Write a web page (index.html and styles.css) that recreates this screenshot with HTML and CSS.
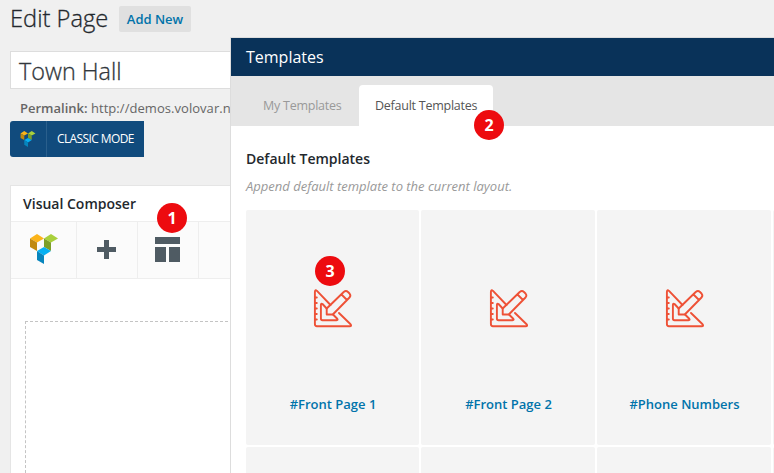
FILE: index.html
```html
<!DOCTYPE html>
<html lang="en">
<head>
<meta charset="utf-8">
<title>Edit Page</title>
<link rel="stylesheet" href="styles.css">
</head>
<body>
<svg class="defs" width="0" height="0">
  <symbol id="cubes" viewBox="0 0 28 30">
    <path fill="#fbb41a" d="M0 4.500 7 0l7 4.500L7 8.500z"/>
    <path fill="#c18a10" d="M0 4.500 7 8.500V17L0 13z"/>
    <path fill="#a9d03c" d="M14 4.500 21 0l7 4.500-7 4z"/>
    <path fill="#7c9f27" d="M14 4.500 21 8.500V17l-7-4z"/>
    <path fill="#06b0f2" d="M7 17l7-4 7 4-7 4.500z"/>
    <path fill="#0785bd" d="M7 17l7 4.500V30l-7-4z"/>
  </symbol>
  <symbol id="draft" viewBox="0 0 42 42">
    <g fill="none" stroke="#ee5136" stroke-width="1.900" stroke-linejoin="round" stroke-linecap="round">
      <path d="M18.500 17 5 2.900Q2.900 1 2.900 4V36Q2.900 38.200 5 38.200H37.500Q40.300 38.200 38.300 36L27 25"/>
      <path d="M14.700 20.500 10.500 16Q8.900 15 8.900 17V30.500Q8.900 32.200 10.500 32.200H24.500Q26.500 32.200 25 30.500L21 26.500"/>
      <path d="M14.700 26.500V20.500L31.700 4Q34 2.200 36 4L37.500 5.500Q39.200 7.500 37.500 9.500L20.800 26.500zM29.500 6.500l5.500 5.500M3 9.500h1.800M3 15h1.800M3 20.500h1.800M3 26h1.800M3 31.500h1.800"/>
    </g>
  </symbol>
</svg>
<main class="page">
  <header class="heading"><h1>Edit Page</h1><a class="add">Add New</a></header>
  <div class="title-field">Town Hall</div>
  <p class="permalink"><strong>Permalink:</strong> <span>http://demos.volovar.n</span></p>
  <div class="mode"><span class="mode-icon"><svg width="16" height="16"><use href="#cubes"/></svg></span><span class="mode-label">CLASSIC MODE</span></div>
  <section class="composer">
    <h2>Visual Composer</h2>
    <div class="tools">
      <span class="tool"><svg width="28" height="30"><use href="#cubes"/></svg></span>
      <span class="tool"><svg width="19" height="19" viewBox="0 0 19 19"><path fill="#4f5b63" d="M7 0h5v7h7v5h-7v7H7v-7H0V7h7z"/></svg></span>
      <span class="tool"><svg width="25" height="25" viewBox="0 0 25 25"><path fill="#4f5b63" d="M0 0h25v7H0zM0 10h11v15H0zM14 10h11v15H14z"/></svg><b class="pin pin-1">1</b></span>
    </div>
    <div class="canvas"></div>
  </section>
</main>
<aside class="panel">
  <header class="panel-head">Templates</header>
  <nav class="tabs"><a class="tab">My Templates</a><a class="tab active">Default Templates<b class="pin pin-2">2</b></a></nav>
  <div class="panel-body">
    <h3>Default Templates</h3>
    <p class="hint">Append default template to the current layout.</p>
    <div class="cards">
      <div class="card"><svg width="42" height="42"><use href="#draft"/></svg><a>#Front Page 1</a><b class="pin pin-3">3</b></div>
      <div class="card"><svg width="42" height="42"><use href="#draft"/></svg><a>#Front Page 2</a></div>
      <div class="card"><svg width="42" height="42"><use href="#draft"/></svg><a>#Phone Numbers</a></div>
      <div class="card"></div>
      <div class="card"></div><div class="card"></div><div class="card"></div><div class="card"></div>
    </div>
  </div>
</aside>
</body>
</html>
```
FILE: styles.css
```css
* { box-sizing: border-box; }
body {
  margin: 0;
  width: 774px;
  height: 473px;
  overflow: hidden;
  position: relative;
  background: #f0f0f0;
  color: #23282d;
  font: 13px/20px "Open Sans", sans-serif;
}
h1, h2, h3, p { margin: 0; }
svg { display: block; flex: none; }
.defs { position: absolute; }
.page { padding: 6px 0 0 10px; }
.heading { display: flex; height: 26px; }
h1 {
  width: 109px;
  font-size: 23.700px;
  font-weight: 300;
  line-height: 25px;
  white-space: nowrap;
  -webkit-text-stroke: 0.300px;
}
.add {
  width: 72px;
  height: 26px;
  border-radius: 2px;
  background: #e0e0e0;
  color: #0073aa;
  font-weight: 600;
  line-height: 27px;
  text-align: center;
}
.title-field {
  height: 38px;
  margin-top: 19px;
  padding-left: 8px;
  border: 1px solid #ddd;
  background: #fff;
  color: #32373c;
  font-size: 23.400px;
  font-weight: 300;
  line-height: 38px;
  -webkit-text-stroke: 0.300px;
}
.permalink { height: 32px; padding: 9px 0 0 10px; color: #666; white-space: nowrap; }
.permalink strong { font-weight: 600; }
.permalink span { letter-spacing: 0.050px; }
.mode {
  display: flex;
  width: 134px;
  height: 36px;
  border-radius: 3px 0 0 3px;
  background: #114b7d;
  color: #fff;
  font-size: 12px;
  line-height: 36px;
}
.mode-icon { width: 37px; padding: 10px 0 0 10px; border-right: 1px solid #2a5f8c; }
.mode-label { padding-left: 10px; letter-spacing: -0.6px; white-space: nowrap; }
.composer { height: 288px; margin-top: 28px; border: 1px solid #e5e5e5; border-bottom: 0; background: #fff; }
h2 { height: 36px; padding-left: 12px; font-size: 14px; font-weight: 600; line-height: 35px; border-bottom: 1px solid #eee; }
.tools { display: flex; height: 57px; background: #fbfbfb; border-bottom: 1px solid #eee; }
.tool { position: relative; display: flex; align-items: center; justify-content: center; width: 61px; padding: 0 1px 2px 0; border-right: 1px solid #eee; }
.tool:first-child { width: 66px; padding-right: 0; }
.canvas { height: 152px; margin: 42px 0 0 14px; border: 1px dashed #c4c4c4; border-bottom: 0; }
.panel {
  position: absolute;
  left: 230px;
  top: 37px;
  width: 544px;
  height: 436px;
  overflow: hidden;
  border: 1px solid #ddd;
  border-width: 1px 0 0 1px;
  background: #fff;
}
.panel-head { height: 38px; padding-left: 15px; background: #093259; color: #fff; font-size: 16px; line-height: 38px; }
.tabs { display: flex; align-items: flex-end; height: 50px; padding-left: 16px; background: #e5e5e5; }
.tab {
  position: relative;
  height: 41px;
  padding: 0 16px;
  color: #999;
  font-size: 12.500px;
  line-height: 41px;
  letter-spacing: -0.250px;
  white-space: nowrap;
}
.tab:first-child { width: 112px; }
.active { width: 134px; border-radius: 4px 4px 0 0; background: #fff; color: #555; }
.panel-body { padding: 23px 0 0 15px; }
h3 { font-size: 14px; font-weight: 600; line-height: 20px; }
.hint { margin-top: 8px; color: #999; font-style: italic; line-height: 19px; }
.cards { display: grid; grid-template-columns: 173px 174px 174px 173px; grid-auto-rows: 235px; gap: 2px; height: 225px; margin-top: 14px; }
.card { position: relative; display: flex; flex-direction: column; align-items: center; padding: 78px 0 0 1px; border-radius: 2px; background: #f4f4f4; }
.card a { margin-top: 64px; color: #0073aa; font-weight: 600; line-height: 20px; }
.pin {
  position: absolute;
  width: 30px;
  height: 30px;
  border-radius: 50%;
  background: #ed0b0f;
  color: #fff;
  font-size: 16px;
  font-weight: 700;
  line-height: 30px;
  letter-spacing: 0;
  text-align: center;
}
.pin-1 { left: 19px; top: -19px; }
.pin-2 { left: 115px; top: 25px; }
.pin-3 { left: 69px; top: 46px; }
```
